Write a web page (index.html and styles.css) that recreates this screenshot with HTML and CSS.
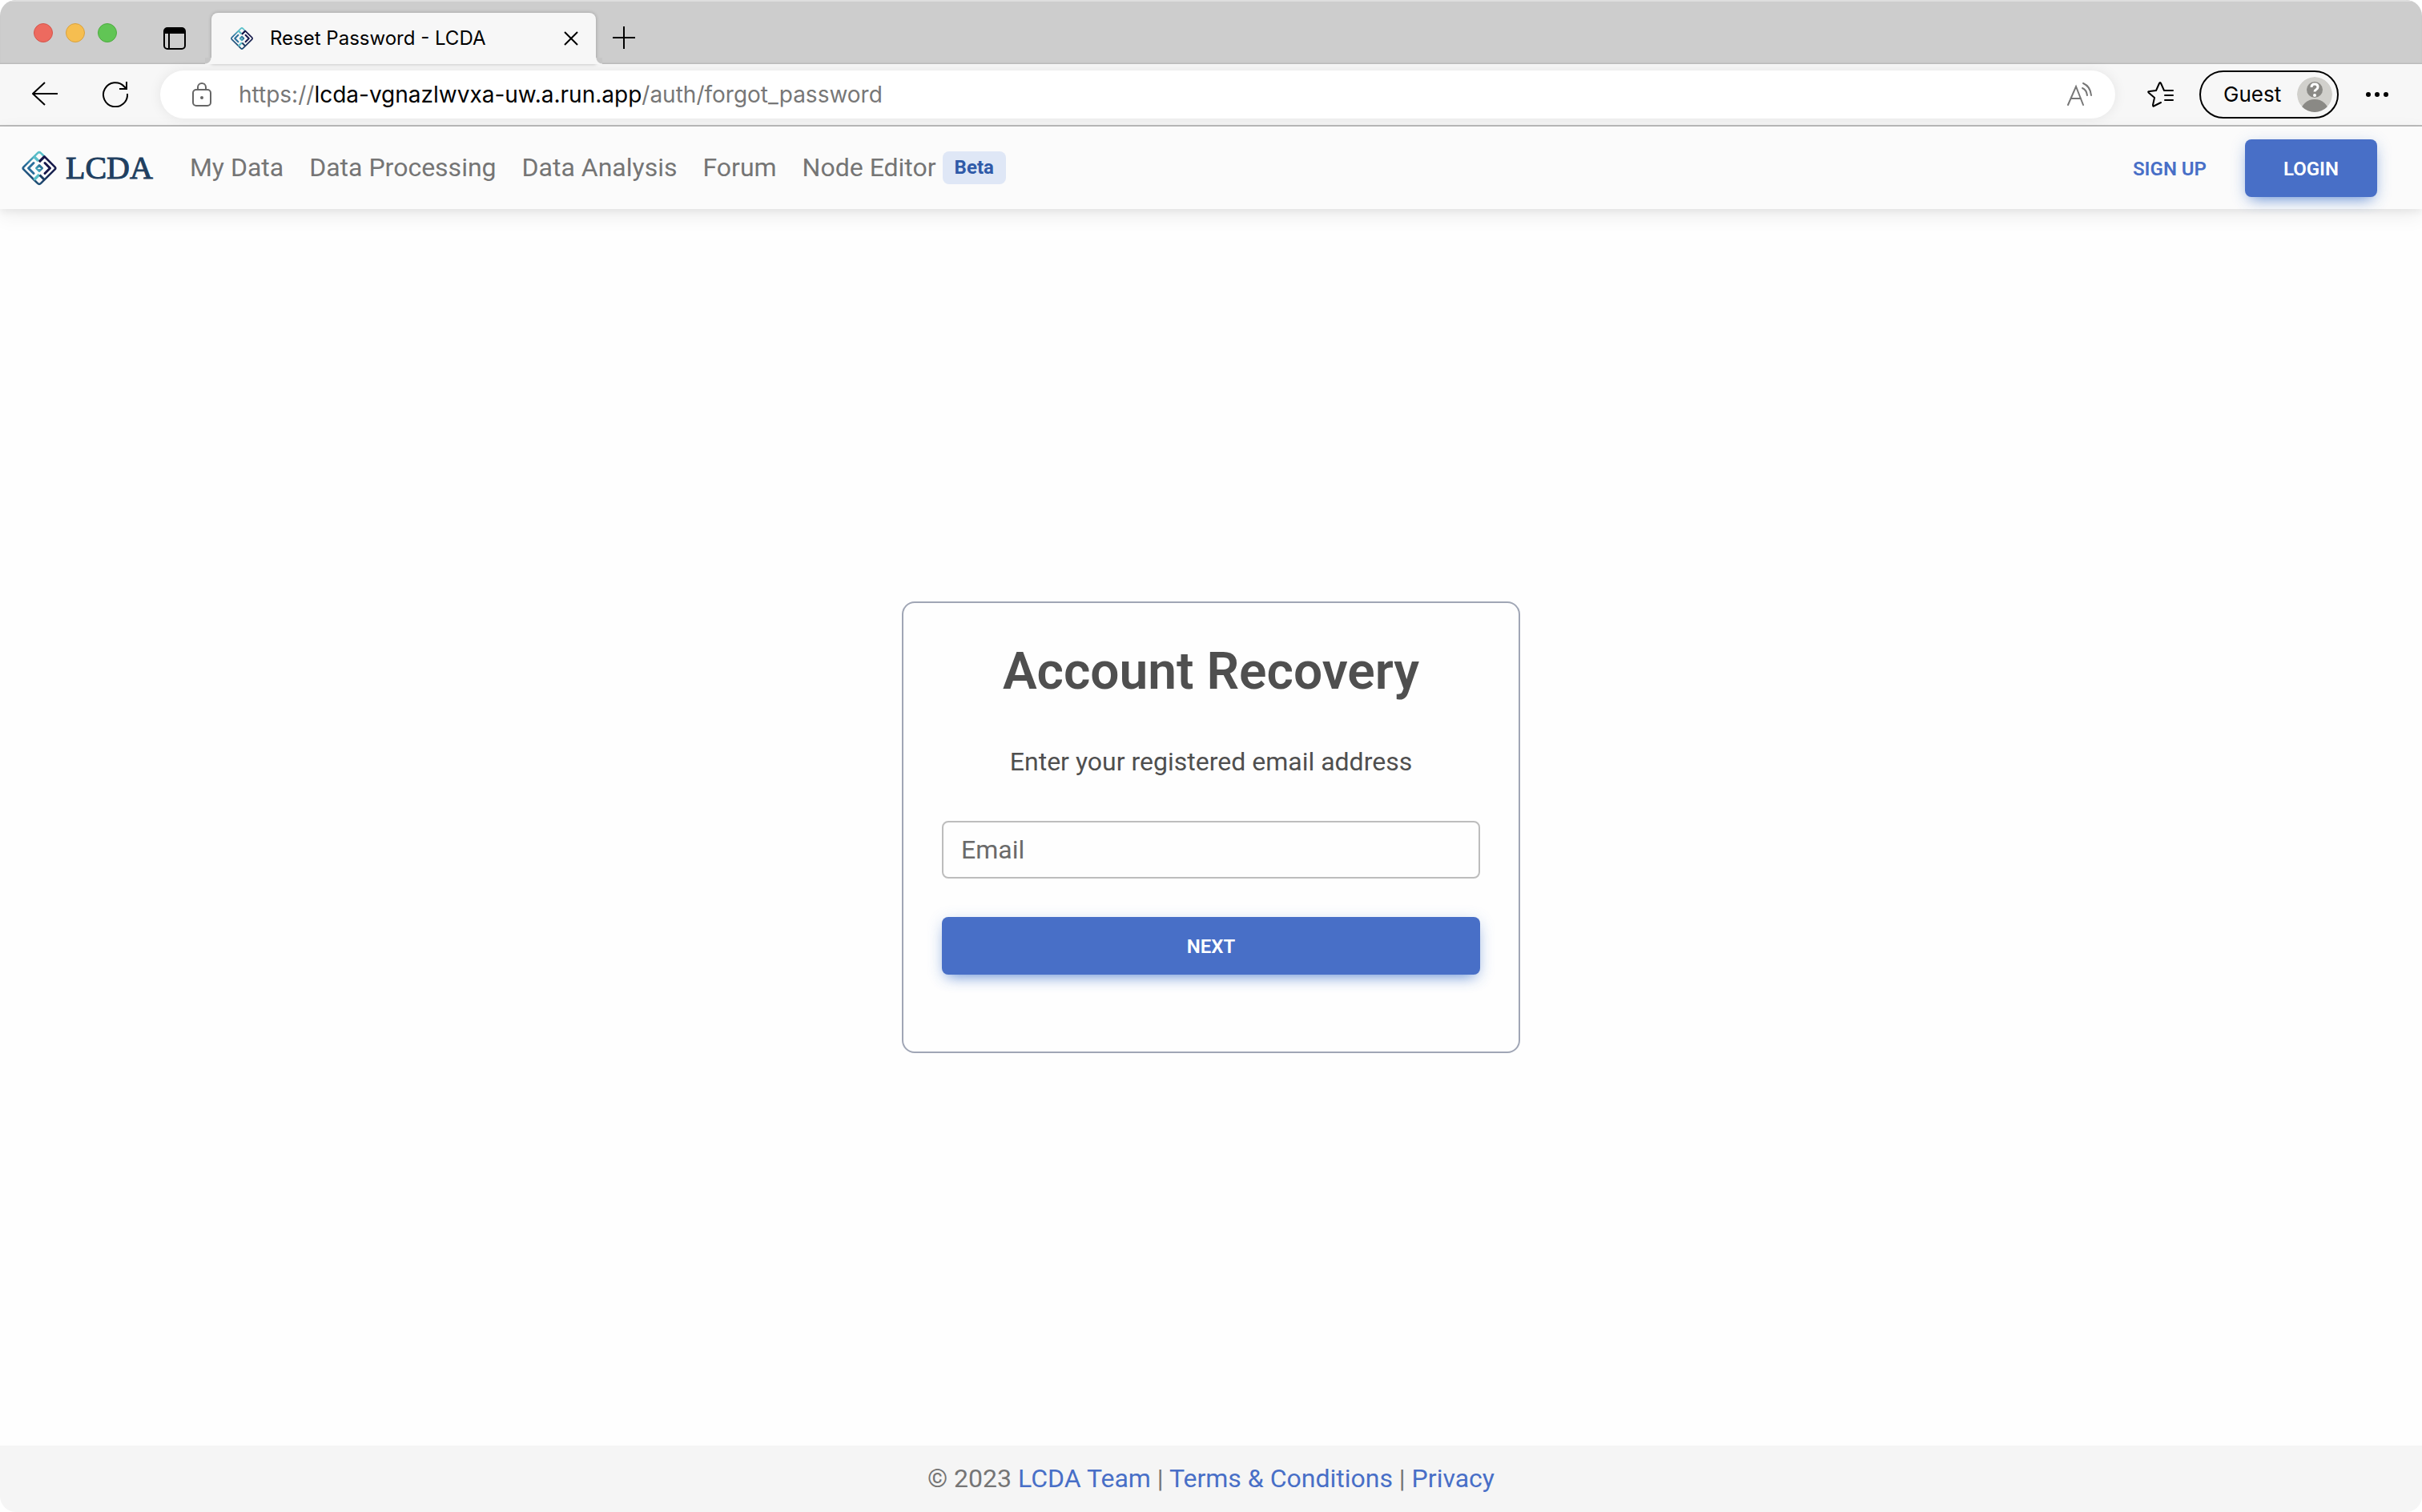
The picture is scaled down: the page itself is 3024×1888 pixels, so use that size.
FILE: index.html
```html
<!DOCTYPE html>
<html lang="en">
<head>
<meta charset="utf-8">
<meta name="viewport" content="width=device-width, initial-scale=1">
<title>Reset Password - LCDA</title>
<link rel="stylesheet" href="styles.css">
</head>
<body>
<svg class="defs" width="0" height="0" aria-hidden="true">
  <defs>
    <linearGradient id="left" gradientUnits="userSpaceOnUse" x1="26" y1="2" x2="12" y2="42">
      <stop offset="0" stop-color="#5cc4cb"/><stop offset=".2" stop-color="#58b8c6"/><stop offset=".5" stop-color="#2b6f9c"/><stop offset="1" stop-color="#1d3d63"/>
    </linearGradient>
    <linearGradient id="right" gradientUnits="userSpaceOnUse" x1="34" y1="12" x2="20" y2="44">
      <stop offset="0" stop-color="#17174a"/><stop offset=".5" stop-color="#1b2b55"/><stop offset="1" stop-color="#22567c"/>
    </linearGradient>
    <linearGradient id="core" x1="1" y1="0" x2="0" y2="1">
      <stop offset="0" stop-color="#235f8c"/><stop offset="1" stop-color="#4fb6c6"/>
    </linearGradient>
    <symbol id="mark" viewBox="0 0 46 46">
      <g fill="none" stroke-width="2.6" stroke-linejoin="round">
        <path stroke="url(#left)" d="M29.500 8.500L25 4.100Q23 2.100 21 4.100L3.600 21.300Q1.900 23 3.600 24.700L16.500 37.500"/>
        <path stroke="url(#right)" d="M23 15L29.500 8.500L42.400 21.300Q44.100 23 42.400 24.700L25 41.900Q23 43.900 21 41.900L16.500 37.500"/>
        <path stroke="#5cc0ca" stroke-width="3.400" d="M16.500 8.500L22 14"/>
        <path stroke="#17174a" stroke-width="3" d="M23 15L29.500 8.500"/>
        <path stroke="#5cc0ca" stroke-width="3.400" d="M16.500 37.500L23 31"/>
        <path stroke="#1d3d63" stroke-width="3" d="M23.500 31.500L29.500 37.500"/>
        <g stroke-width="3" stroke-linecap="round">
          <path stroke="#2b6f9c" d="M16 16.500L9.500 23L16 29.500"/>
          <path stroke="#17174a" d="M30 16.500L36.500 23L30 29.500"/>
        </g>
        <path stroke="url(#core)" stroke-width="3" d="M23 19.500L26.500 23L23 26.500L19.500 23Z"/>
      </g>
    </symbol>
  </defs>
</svg>
<div class="window">
  <div class="tabstrip">
    <div class="lights"><span class="light red"></span><span class="light yellow"></span><span class="light green"></span></div>
    <button class="icon-btn tab-actions" aria-label="Tab actions">
      <svg width="28" height="28" viewBox="0 0 28 28"><rect x="1" y="1" width="26" height="26" rx="4" fill="none" stroke="#000" stroke-width="2"/><path d="M1 8V4q0-3 3-3h20q3 0 3 3v4zM6 8h2v19H6z"/></svg>
    </button>
    <div class="tab">
      <svg class="favicon" width="30" height="30"><use href="#mark"/></svg>
      <span class="tab-title">Reset Password - LCDA</span>
      <button class="icon-btn" aria-label="Close tab">
        <svg width="18" height="18" viewBox="0 0 18 18" fill="none" stroke="#000" stroke-width="2"><path d="M1 1l16 16M17 1L1 17"/></svg>
      </button>
    </div>
    <button class="icon-btn new-tab" aria-label="New tab">
      <svg width="28" height="28" viewBox="0 0 28 28" fill="none" stroke="#000" stroke-width="2"><path d="M14 0v28M0 14h28"/></svg>
    </button>
  </div>
  <div class="toolbar">
    <button class="icon-btn" aria-label="Back">
      <svg width="32" height="32" viewBox="0 0 32 32" fill="none" stroke="#000" stroke-width="2" stroke-linejoin="round"><path d="M32 15H1M16 1L1 15l15 14"/></svg>
    </button>
    <button class="icon-btn reload" aria-label="Refresh">
      <svg width="32" height="32" viewBox="0 0 32 32" fill="none" stroke="#000" stroke-width="2"><path d="M31 15a15 15 0 1 1-4-9l3 3M30 0v9h-9"/></svg>
    </button>
    <div class="address">
      <svg width="24" height="30" viewBox="0 0 24 30" fill="none" stroke="#666" stroke-width="2"><rect x="1" y="9" width="22" height="20" rx="4"/><path d="M7 9V6a5 5 0 0 1 10 0v3"/><circle cx="12" cy="19" r="2" fill="#666" stroke="none"/></svg>
      <div class="url" role="textbox" aria-label="Address">https://<span class="host">lcda-vgnazlwvxa-uw.a.run.app</span>/auth/forgot_password</div>
      <button class="icon-btn" aria-label="Read aloud">
        <svg width="32" height="30" viewBox="0 0 32 30" fill="none" stroke="#777" stroke-width="2" stroke-linecap="round"><path d="M1 28L11 5l9 23M5 20h12M19 7q5 2 6 9M20 1q9 4 10 15"/></svg>
      </button>
    </div>
    <button class="icon-btn favorites" aria-label="Favorites">
      <svg width="34" height="32" viewBox="0 0 34 32" fill="none" stroke="#000" stroke-width="2" stroke-linejoin="round" stroke-linecap="round"><path d="M32 11H21L17 2Q16 0 15 2L11 11L3 12Q0 12 2 14L9 20L7 29Q7 32 9 30L17 26M22 17h10M22 23h10"/></svg>
    </button>
    <button class="profile">Guest
      <svg width="44" height="44" viewBox="0 0 44 44"><clipPath id="disc"><circle cx="22" cy="22" r="22"/></clipPath><g clip-path="url(#disc)"><circle cx="22" cy="22" r="22" fill="#d1d0cc"/><circle cx="22" cy="16" r="10" fill="#8a8985"/><ellipse cx="22" cy="43" rx="17" ry="15" fill="#8a8985"/></g><path d="M18 13q0-4 4-4t4 3.500q0 2-2 3.200t-2 2.800" fill="none" stroke="#fff" stroke-width="3"/><circle cx="22" cy="23" r="2" fill="#fff"/></svg>
    </button>
    <button class="icon-btn more" aria-label="Settings and more">
      <svg width="28" height="6" viewBox="0 0 28 6"><circle cx="3" cy="3" r="3"/><circle cx="14" cy="3" r="3"/><circle cx="25" cy="3" r="3"/></svg>
    </button>
  </div>
  <header class="navbar">
    <a class="brand" href="#"><svg width="46" height="46"><use href="#mark"/></svg><span>LCDA</span></a>
    <nav class="links">
      <a href="#">My Data</a>
      <a href="#">Data Processing</a>
      <a href="#">Data Analysis</a>
      <a href="#">Forum</a>
      <a class="with-badge" href="#">Node Editor <span class="badge">Beta</span></a>
    </nav>
    <a class="btn btn-link" href="#">SIGN UP</a>
    <button class="btn btn-primary">LOGIN</button>
  </header>
  <main class="content">
    <form class="card">
      <h1>Account Recovery</h1>
      <label for="email">Enter your registered email address</label>
      <input id="email" type="email" placeholder="Email">
      <button class="btn btn-primary" type="button">NEXT</button>
    </form>
  </main>
  <footer class="footer">© 2023 <a href="#">LCDA Team</a> | <a href="#">Terms &amp; Conditions</a> | <a href="#">Privacy</a></footer>
</div>
</body>
</html>
```
FILE: styles.css
```css
* { box-sizing: border-box; }

body {
  margin: 0;
  background: #fff;
  color: #4f4f4f;
  font: 32px/51px Roboto, sans-serif;
}

a { color: #486fc7; text-decoration: none; }
svg { display: block; flex: none; }
.defs { position: absolute; }

.window {
  display: flex;
  flex-direction: column;
  min-height: 100vh;
  border-radius: 20px;
  overflow: hidden;
  background: #fefefe;
}

.icon-btn {
  display: flex;
  padding: 0;
  border: 0;
  background: none;
}

/* Browser tab strip */
.tabstrip {
  display: flex;
  align-items: center;
  height: 80px;
  padding: 2px 42px 0;
  background: #cdcdcd;
  box-shadow: inset 0 2px #dedede, inset 0 -2px 2px -1px #b4b4b4;
}

.lights { display: flex; gap: 16px; }
.light { width: 24px; height: 24px; border-radius: 50%; border: 1px solid; }
.red { background: #ed6a5f; border-color: #d5554b; }
.yellow { background: #f6be50; border-color: #d9a13d; }
.green { background: #61c555; border-color: #4eab40; }
.tab-actions { margin: 14px 32px 0 58px; }

.tab {
  position: relative;
  display: flex;
  align-items: center;
  align-self: flex-end;
  width: 480px;
  height: 64px;
  padding: 0 22px 0 23px;
  border-radius: 8px 8px 0 0;
  background: #f7f7f7;
  box-shadow: 0 0 4px rgba(0, 0, 0, .25);
  font: 24px/32px Inter, sans-serif;
  color: #000;
}

.tab::before,
.tab::after {
  content: "";
  position: absolute;
  bottom: 0;
  width: 8px;
  height: 8px;
}
.tab::before { left: -8px; background: radial-gradient(circle at 0 0, #c6c6c6 7px, #f7f7f7 8px); }
.tab::after { right: -8px; background: radial-gradient(circle at 100% 0, #c6c6c6 7px, #f7f7f7 8px); }

.tab-title { flex: 1; margin-left: 20px; }
.new-tab { margin: 12px 0 0 21px; }

/* Browser toolbar */
.toolbar {
  display: flex;
  align-items: center;
  height: 78px;
  padding: 0 42px 0 40px;
  border-bottom: 2px solid #bbb;
  background: #f7f7f7;
  color: #000;
}

.reload { margin: 0 40px 0 56px; }

.address {
  flex: 1;
  display: flex;
  align-items: center;
  height: 60px;
  padding: 0 28px 0 40px;
  border-radius: 30px;
  background: #fff;
  box-shadow: 0 0 16px rgba(0, 0, 0, .08);
}

.url { flex: 1; margin-left: 34px; color: #777; font: 28px/40px Inter, sans-serif; }
.host { color: #000; }
.favorites { margin: 0 31px 0 40px; }

.profile {
  display: flex;
  align-items: center;
  justify-content: space-between;
  width: 174px;
  height: 60px;
  padding: 0 6px 0 28px;
  border: 2px solid #000;
  border-radius: 30px;
  background: none;
  color: #000;
  font: 26px/32px Inter, sans-serif;
}

.more { margin-left: 34px; }

/* Site navigation */
.navbar {
  display: flex;
  align-items: center;
  height: 103px;
  padding: 0 56px 0 26px;
  background: #fbfbfb;
  box-shadow: 0 8px 24px rgba(0, 0, 0, .07), 0 4px 8px rgba(0, 0, 0, .05);
}

.brand {
  display: flex;
  align-items: center;
  gap: 10px;
  color: #1f3f60;
  font: 40px/52px "Liberation Serif", serif;
  -webkit-text-stroke: 1px;
}

.links { flex: 1; display: flex; gap: 32px; margin-left: 46px; }
.links a { color: #757575; }
.links .with-badge { display: flex; align-items: center; gap: 8px; }

.badge {
  padding: 8px 15px;
  border-radius: 8px;
  background: #dfe7f6;
  color: #2f5aa8;
  font: 700 24px/25px Roboto, sans-serif;
}

.btn {
  height: 72px;
  padding: 2px 48px 0;
  border: 0;
  border-radius: 8px;
  font: 600 24px/70px Roboto, sans-serif;
}
.btn-link { color: #486fc7; }
.btn-primary {
  background: #486fc7;
  color: #fff;
  box-shadow: 0 8px 18px -8px rgba(59, 113, 202, .8), 0 4px 20px rgba(59, 113, 202, .2);
}

/* Recovery form */
.content {
  flex: 1;
  display: flex;
  align-items: center;
  justify-content: center;
}

.card {
  display: flex;
  flex-direction: column;
  width: 772px;
  padding: 48px 48px 96px;
  border: 2px solid #a0a6b5;
  border-radius: 16px;
  text-align: center;
}
.card h1 { margin: 0 0 50px; font: 600 64px/75px Roboto, sans-serif; }
.card label { margin-bottom: 48px; }
.card input {
  height: 72px;
  margin-bottom: 48px;
  padding: 0 22px;
  border: 2px solid #bdbdbd;
  border-radius: 8px;
  background: none;
  font: 32px/51px Roboto, sans-serif;
}
.card input::placeholder { color: #6a6a6a; }

.footer {
  padding: 16px;
  background: #f5f5f5;
  color: #757575;
  text-align: center;
}
```
